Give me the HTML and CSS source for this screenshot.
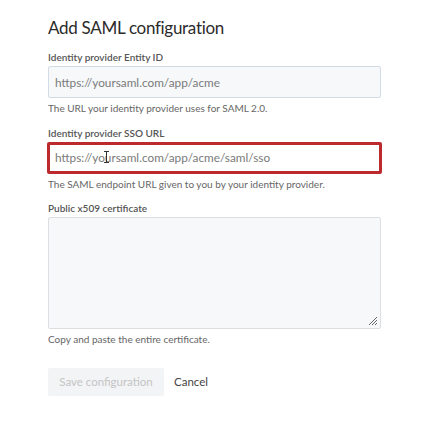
FILE: index.html
```html
<!DOCTYPE html>
<html>
<head>
<meta charset="utf-8">
<link rel="stylesheet" href="styles.css">
</head>
<body>
<main class="page">
  <h1 class="title">Add SAML configuration</h1>
  <div class="field">
    <label class="label">Identity provider Entity ID</label>
    <div class="input">https://yoursaml.com/app/acme</div>
    <p class="help">The URL your identity provider uses for SAML 2.0.</p>
  </div>
  <div class="field">
    <label class="label">Identity provider SSO URL</label>
    <div class="input input-focus">https://yoursaml.com/app/acme/saml/sso
      <svg class="ibeam" width="7" height="12" viewBox="0 0 7 12"><path d="M1 0.5h5M3.5 0.5v11M1 11.5h5" stroke="#333" stroke-width="1" fill="none"/></svg>
    </div>
    <p class="help">The SAML endpoint URL given to you by your identity provider.</p>
  </div>
  <div class="field">
    <label class="label">Public x509 certificate</label>
    <div class="textarea">
      <svg class="grip" width="10" height="10" viewBox="0 0 10 10"><path d="M9 1L1 9M9 4L4 9M9 7L7 9" stroke="#666" stroke-width="1"/></svg>
    </div>
    <p class="help">Copy and paste the entire certificate.</p>
  </div>
  <div class="actions">
    <span class="btn-save">Save configuration</span>
    <span class="btn-cancel">Cancel</span>
  </div>
</main>
</body>
</html>
```

FILE: styles.css
```css
* { box-sizing: border-box; }
body {
  margin: 0;
  background: #fff;
  font-family: Lato, "Noto Sans", sans-serif;
  color: #333;
}
.page {
  padding: 16px 0 0 48px;
  width: 381px;
  display: flex;
  flex-direction: column;
}
.title {
  margin: 0 0 10px;
  font-size: 17px;
  font-weight: 400;
  line-height: 24px;
  letter-spacing: -0.3px;
  color: #2b2b2b;
}
.field {
  display: flex;
  flex-direction: column;
}
.label {
  font-size: 10px;
  font-weight: 600;
  color: #555;
  line-height: 14px;
  margin-bottom: 2px;
}
.input {
  position: relative;
  height: 32px;
  border: 1px solid #d3dce4;
  background: #f6f8fa;
  border-radius: 2px;
  padding: 0 6px;
  font-size: 11.8px;
  color: #7a7a7a;
  display: flex;
  align-items: center;
}
.input-focus {
  background: #fff;
  border: 3px solid #bd2a2e;
  margin: 0 -1px;
  padding-left: 5px;
}
.ibeam {
  position: absolute;
  left: 53px;
  top: 6px;
}
.help {
  margin: 4px 0 10.5px;
  font-size: 10px;
  line-height: 13px;
  color: #666;
}
.textarea {
  position: relative;
  height: 112px;
  border: 1px solid #dcdfe2;
  background: #f7f8fa;
  border-radius: 2px;
}
.grip {
  position: absolute;
  right: 2px;
  bottom: 2px;
}
.actions {
  margin-top: 11px;
  display: flex;
  align-items: center;
  gap: 10px;
}
.btn-save {
  width: 116px;
  height: 28px;
  background: #f3f4f6;
  color: #c4c4c4;
  font-size: 11.5px;
  display: flex;
  align-items: center;
  justify-content: center;
  border-radius: 2px;
}
.btn-cancel {
  font-size: 11.5px;
  color: #444;
}
```
